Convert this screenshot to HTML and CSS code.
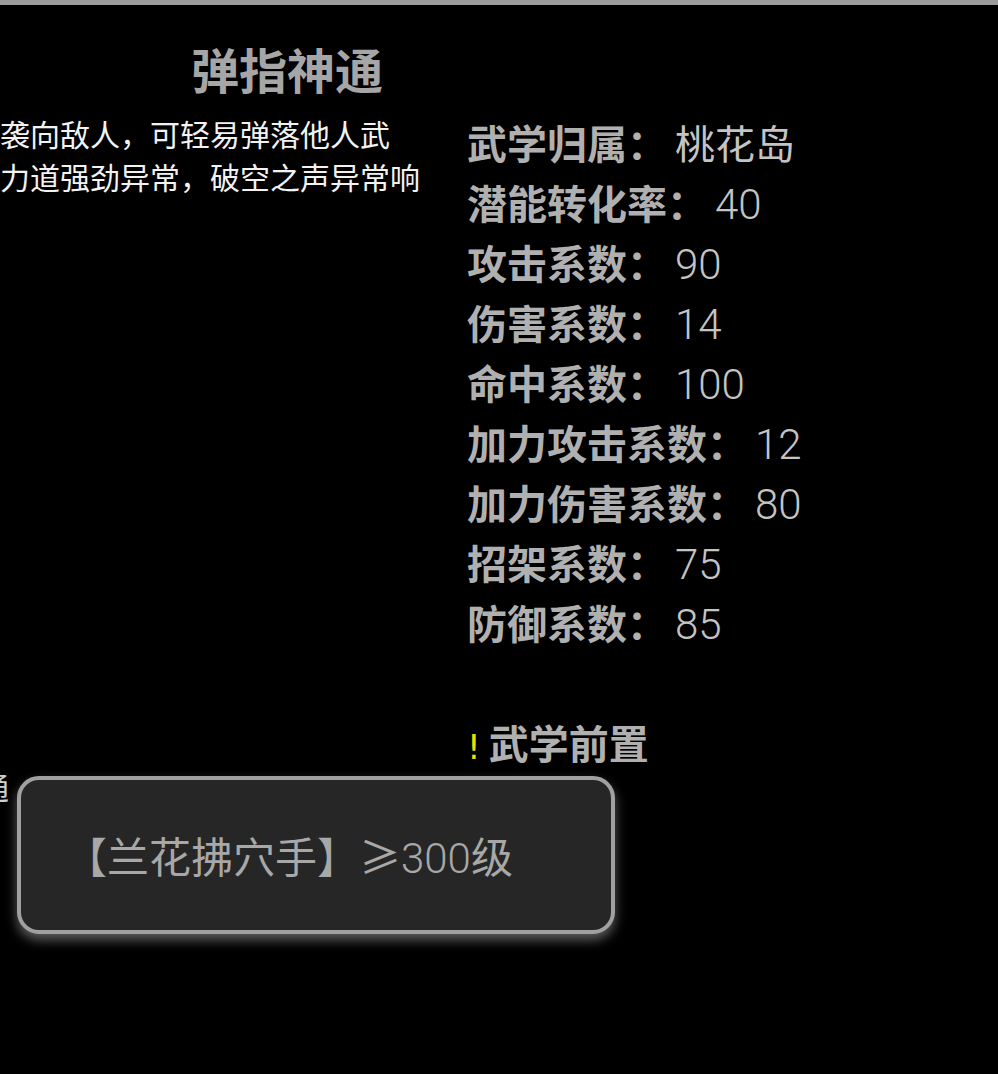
FILE: index.html
```html
<!DOCTYPE html>
<html lang="zh">
<head>
<meta charset="utf-8">
<title>弹指神通</title>
<link rel="stylesheet" href="styles.css">
</head>
<body>
<div class="topbar"></div>
<main class="page">
  <section class="left">
    <h1 class="title">弹指神通</h1>
    <div class="desc">
      <p>袭向敌人，可轻易弹落他人武</p>
      <p>力道强劲异常，破空之声异常响</p>
    </div>
    <div class="cut">通</div>
  </section>
  <section class="right">
    <ul class="stats">
      <li><b>武学归属：</b><span class="val">桃花岛</span></li>
      <li><b>潜能转化率：</b><span class="val num">40</span></li>
      <li><b>攻击系数：</b><span class="val num">90</span></li>
      <li><b>伤害系数：</b><span class="val num">14</span></li>
      <li><b>命中系数：</b><span class="val num">100</span></li>
      <li><b>加力攻击系数：</b><span class="val num">12</span></li>
      <li><b>加力伤害系数：</b><span class="val num">80</span></li>
      <li><b>招架系数：</b><span class="val num">75</span></li>
      <li><b>防御系数：</b><span class="val num">85</span></li>
    </ul>
    <h2 class="pre"><span class="mark">!</span>武学前置</h2>
  </section>
</main>
<div class="tooltip">【兰花拂穴手】≥<span class="tnum">300</span>级</div>
</body>
</html>
```
FILE: styles.css
```css
html, body {
  margin: 0;
  padding: 0;
  background: #000;
  height: 100%;
}
body {
  font-family: "Noto Sans CJK SC", "Noto Sans", sans-serif;
  color: #b0b0b0;
  overflow: hidden;
  position: relative;
}
.topbar {
  height: 5px;
  background: #9c9c9c;
}
.page {
  display: flex;
}
.left {
  width: 467px;
  flex: none;
  overflow: hidden;
}
.title {
  margin: 33px 0 0 0;
  padding-left: 191px;
  font-size: 48px;
  line-height: 60px;
  font-weight: 700;
  color: #a6a6a6;
}
.desc {
  margin-top: 14px;
  color: #f2f2f2;
  font-size: 30px;
  line-height: 43px;
  white-space: nowrap;
}
.desc p {
  margin: 0;
}
.cut {
  margin: 568px 0 0 -21px;
  font-size: 30px;
  line-height: 40px;
  color: #d0d0d0;
}
.right {
  padding-top: 107px;
}
.stats {
  list-style: none;
  margin: 0;
  padding: 0;
}
.stats li {
  display: flex;
  align-items: baseline;
  height: 60px;
  font-size: 40px;
  line-height: 60px;
  white-space: nowrap;
}
.stats b {
  font-weight: 700;
  color: #b0b0b0;
}
.val {
  font-weight: 400;
  color: #c4c4c4;
  margin-left: 8px;
}
.num {
  font-family: Roboto, "Noto Sans CJK SC", sans-serif;
  font-weight: 300;
  font-size: 42px;
}
.pre {
  margin: 60px 0 0 0;
  font-size: 40px;
  line-height: 60px;
  font-weight: 700;
  color: #b0b0b0;
}
.mark {
  color: #f0e000;
  font-weight: 400;
  font-family: "DejaVu Sans", sans-serif;
  font-size: 34px;
  margin-right: 8px;
}
.tooltip {
  position: absolute;
  left: 17px;
  top: 776px;
  width: 590px;
  height: 150px;
  box-sizing: content-box;
  border: 4px solid #a0a0a0;
  border-radius: 22px;
  background: #262626;
  box-shadow: 0 6px 12px rgba(170, 170, 170, 0.55);
  color: #a8a8a8;
  font-size: 42px;
  line-height: 150px;
  text-indent: 44px;
  white-space: nowrap;
}
.tnum {
  font-family: Roboto, "Noto Sans CJK SC", sans-serif;
  font-weight: 300;
}
```
